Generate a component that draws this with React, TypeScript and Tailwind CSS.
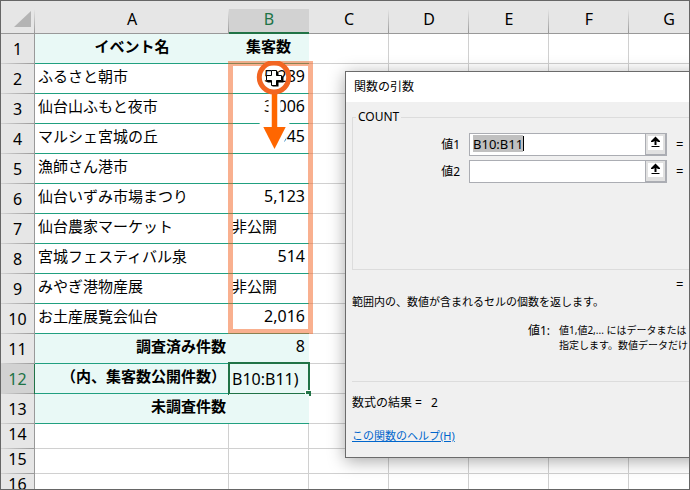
import { useEffect, useRef } from "react";
import type { ReactNode } from "react";

type Row = {
  no:      number;
  name?:   string;
  value?:  string;
  kind:    "head" | "data" | "total" | "blank";
};

const COLUMNS = ["A", "B", "C", "D", "E", "F", "G"];

const ROWS: Row[] = [
  { no: 1,  kind: "head",  name: "イベント名",             value: "集客数" },
  { no: 2,  kind: "data",  name: "ふるさと朝市",           value: "5,289" },
  { no: 3,  kind: "data",  name: "仙台山ふもと夜市",       value: "3,006" },
  { no: 4,  kind: "data",  name: "マルシェ宮城の丘",       value: "1,645" },
  { no: 5,  kind: "data",  name: "漁師さん港市" },
  { no: 6,  kind: "data",  name: "仙台いずみ市場まつり",   value: "5,123" },
  { no: 7,  kind: "data",  name: "仙台農家マーケット",     value: "非公開" },
  { no: 8,  kind: "data",  name: "宮城フェスティバル泉",   value: "514" },
  { no: 9,  kind: "data",  name: "みやぎ港物産展",         value: "非公開" },
  { no: 10, kind: "data",  name: "お土産展覧会仙台",       value: "2,016" },
  { no: 11, kind: "total", name: "調査済み件数",           value: "8" },
  { no: 12, kind: "total", name: "（内、集客数公開件数）", value: "B10:B11)" },
  { no: 13, kind: "total", name: "未調査件数" },
  { no: 14, kind: "blank" },
  { no: 15, kind: "blank" },
  { no: 16, kind: "blank" },
];

const ACTIVE_ROW = 12;
const ACTIVE_COL = "B";

function DragGuide() {
  return (
    <svg
      className="absolute -left-px -top-[3px] z-10 pointer-events-none"
      width="86"
      height="273"
      viewBox="0 0 86 273"
      fill="none"
      aria-hidden="true"
    >
      <rect x="2.5" y="2.5" width="80" height="268" stroke="#f4621f" strokeOpacity="0.5" strokeWidth="5" />
      <path d="M46.5 34V70M46.5 86L36 66.5H57Z" stroke="#fff" strokeWidth="12" strokeLinejoin="round" />
      <path d="M46.5 30V68" stroke="#ff6600" strokeWidth="5.5" />
      <path d="M35.3 66H57.7L46.5 88Z" fill="#ff6600" />
      <circle cx="46" cy="16.3" r="14.7" stroke="#f26522" strokeWidth="5" />
      <path d="M44.5 10.5h6v5h5v6h-5v4h-6v-4h-5v-6h5Z" fill="#000" />
      <path d="M43.5 9.5h5v5h5v5h-5v5h-5v-5h-5v-5h5Z" fill="#fff" stroke="#000" />
    </svg>
  );
}

function RowHeader({ no, short }: { no: number; short: boolean }) {
  const active = no === ACTIVE_ROW;
  return (
    <th
      scope="row"
      className={`p-0 text-center font-normal border-r bg-[linear-gradient(to_right,#d4d4d4,#999)] bg-[length:100%_1px] bg-bottom bg-no-repeat ${
        short ? "align-top" : "align-middle"
      } ${active ? "bg-[#d2d2d2] text-[#217346] border-[#217346]" : "bg-[#e6e6e6] border-[#999]"}`}
    >
      {no}
    </th>
  );
}

function SheetRow({ row }: { row: Row }) {
  const { no, name, value, kind } = row;
  const filled = kind !== "blank";
  const tinted = kind === "head" || kind === "total";
  const edge = filled ? "border-b border-[#21a080]" : "border-b border-r border-[#d0d0d0]";
  const numeric = value !== undefined && /^[\d,]+$/.test(value);
  const active = no === ACTIVE_ROW;

  return (
    <tr className={filled ? "h-[30px]" : "h-[25px]"}>
      <RowHeader no={no} short={!filled} />
      <td
        className={`px-[3px] pt-[2px] pb-0 align-top text-[15px] leading-5 whitespace-nowrap ${edge} ${tinted ? "bg-[#e9f9f6] font-bold" : ""} ${
          kind === "head" ? "text-center" : kind === "total" ? "text-right" : "text-left"
        }`}
      >
        {name}
      </td>
      <td
        className={`relative pl-[3px] pr-1 pb-0 align-top leading-5 whitespace-nowrap ${edge} ${tinted ? "bg-[#e9f9f6]" : ""} ${
          kind === "head" ? "text-center font-bold" : numeric ? "text-right" : "text-left"
        } ${numeric || active ? "text-base" : "text-[15px]"} ${active ? "pt-[5px]" : "pt-[2px]"}`}
      >
        {value}
        {no === 2 && <DragGuide />}
        {active && (
          <span className="absolute -inset-x-px -top-[2px] -bottom-[2px] border-2 border-[#217346]">
            <span className="absolute -right-[3px] -bottom-[3px] size-[5px] box-content border-t border-l border-white bg-[#217346]" />
          </span>
        )}
      </td>
      {COLUMNS.slice(2).map((col) => (
        <td key={col} className="p-0 border-b border-r border-[#d0d0d0]" />
      ))}
    </tr>
  );
}

function Sheet() {
  return (
    <table className="table-fixed border-separate border-spacing-0 w-full min-w-[708px] text-base leading-5">
      <colgroup>
        <col className="w-[34px]" />
        <col className="w-[194px]" />
        <col className="w-20" />
        <col className="w-20" />
        <col className="w-20" />
        <col className="w-20" />
        <col className="w-20" />
        <col />
      </colgroup>
      <thead>
        <tr className="h-[33px] bg-[#e6e6e6]">
          <td className="p-0 border-b border-[#999] bg-[linear-gradient(to_bottom,transparent_8px,#999)] bg-[length:1px_100%] bg-right bg-no-repeat">
            <svg className="ml-[13px] mt-1" width="17" height="16" viewBox="0 0 17 16" aria-hidden="true">
              <path d="M17 0V16H0Z" fill="#b4b4b4" />
            </svg>
          </td>
          {COLUMNS.map((col) => (
            <th
              key={col}
              scope="col"
              className={`p-0 pt-1 font-normal text-center bg-no-repeat ${
                col === ACTIVE_COL
                  ? "border-b-2 border-[#217346] text-[#217346] bg-[linear-gradient(to_bottom,#e6e6e6_8px,#d2d2d2_8px)]"
                  : "border-b border-[#999] bg-[linear-gradient(to_bottom,transparent_8px,#999)] bg-[length:1px_100%] bg-right"
              }`}
            >
              {col}
            </th>
          ))}
        </tr>
      </thead>
      <tbody>
        {ROWS.map((row) => <SheetRow key={row.no} row={row} />)}
      </tbody>
    </table>
  );
}

function ArgumentField({
  id,
  label,
  value = "",
  selected = false,
}: {
  id:        string;
  label:     string;
  value?:    string;
  selected?: boolean;
}) {
  const ref = useRef<HTMLInputElement>(null);

  useEffect(() => {
    if (selected) {
      ref.current?.focus();
      ref.current?.select();
    }
  }, [selected]);

  return (
    <div className="flex items-center h-[23px]">
      <label htmlFor={id} className="w-[107px] text-right text-xs">{label}</label>
      <div className="relative ml-[9px] flex h-[23px] w-[198px] border border-[#abadb3] bg-white">
        <input
          ref={ref}
          id={id}
          type="text"
          defaultValue={value}
          className="min-w-0 flex-1 h-[17px] mt-px px-[3px] text-[13px] leading-4 outline-none selection:bg-[#c0c0c0] selection:text-black"
        />
        {selected && <span className="absolute left-[53px] top-[2px] h-[15px] w-px bg-black" />}
        <button
          type="button"
          aria-label={`${label}の範囲を選択`}
          className="flex w-[21px] items-start justify-center border-l border-b border-r border-[#abadb3] bg-[#e1e1e1] pt-[2px]"
        >
          <span className="flex h-[14px] w-[15px] justify-center bg-white">
            <svg width="11" height="12" viewBox="0 0 11 12" aria-hidden="true">
              <path d="M5.5 0.5L10 5V6H8L6.5 5V9H4.5V5L3 6H1V5Z" fill="#000" />
              <path d="M1.5 10.5H9.5" stroke="#000" />
            </svg>
          </span>
        </button>
      </div>
      <span className="ml-[9px] text-[13px]">=</span>
    </div>
  );
}

function Line({ className, children }: { className: string; children: ReactNode }) {
  return <p className={`leading-4 whitespace-nowrap ${className}`}>{children}</p>;
}

function FunctionArgumentsDialog() {
  return (
    <section
      role="dialog"
      aria-labelledby="dialog-title"
      className="absolute left-[344px] -right-6 top-[70px] z-20 border border-[#6b6b6b] bg-[#f0f0f0] text-[11px] shadow-[0_3px_16px_rgba(0,0,0,0.35)]"
    >
      <h2 id="dialog-title" className="flex h-[30px] items-center bg-white pl-2 text-xs">関数の引数</h2>
      <div className="pl-[6px] pt-[7px] pb-[13px]">
        <fieldset className="min-w-0 border border-[#dcdcdc] px-0 pt-2 pb-[86px]">
          <legend className="ml-[3px] px-[2px] text-xs leading-4">COUNT</legend>
          <div className="flex flex-col gap-1">
            <ArgumentField id="arg-1" label="値1" value="B10:B11" selected />
            <ArgumentField id="arg-2" label="値2" />
          </div>
        </fieldset>
        <Line className="mt-[6px] ml-[324px] text-[13px]">=</Line>
        <Line className="mt-[2px]">範囲内の、数値が含まれるセルの個数を返します。</Line>
        <dl className="mt-[13px] flex leading-[15px] whitespace-nowrap">
          <dt className="w-[207px] pr-[9px] text-right text-xs leading-[15px]">値1:</dt>
          <dd className="text-[10px] leading-[15px]">
            値1,値2,... にはデータまたは<br />
            指定します。数値データだけ
          </dd>
        </dl>
        <hr className="mt-7 border-[#dcdcdc]" />
        <Line className="mt-[13px] text-xs">数式の結果 =&ensp; 2</Line>
        <Line className="mt-[17px]">
          <a href="#help" className="text-[#0066cc] underline">この関数のヘルプ(H)</a>
        </Line>
      </div>
    </section>
  );
}

export default function App() {
  return (
    <main className="relative h-screen overflow-hidden border border-[#666] bg-white text-black font-['Noto_Sans','Noto_Sans_CJK_JP',sans-serif]">
      <Sheet />
      <FunctionArgumentsDialog />
    </main>
  );
}
